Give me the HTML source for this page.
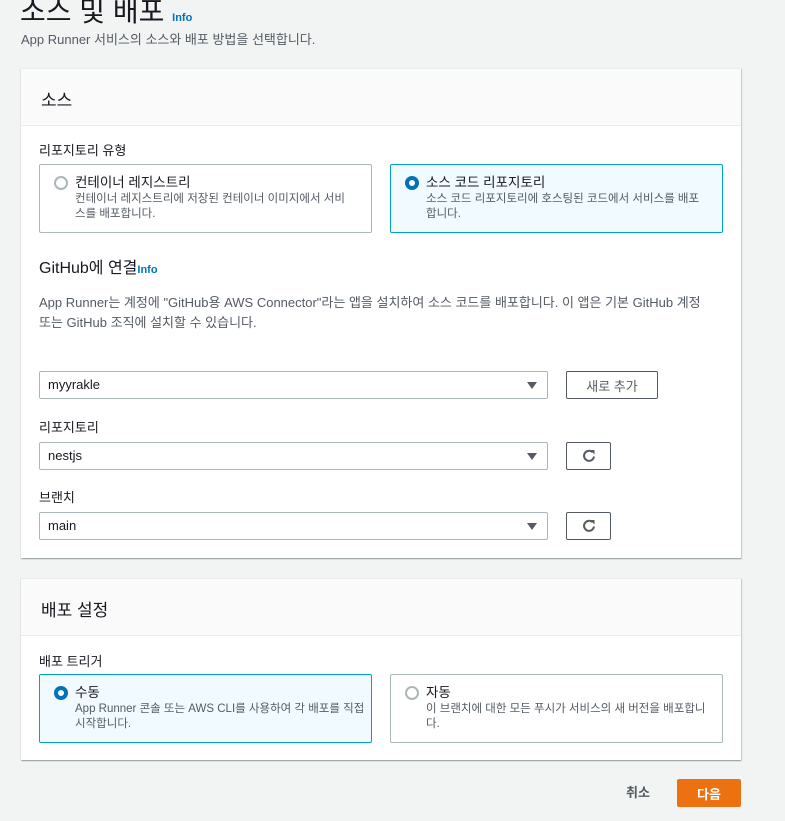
<!DOCTYPE html>
<html><head><meta charset="utf-8"><style>
*{box-sizing:border-box;margin:0;padding:0}
body{width:785px;height:821px;background:#f2f3f3;font-family:"Liberation Sans","Noto Sans CJK KR",sans-serif;color:#16191f;position:relative;overflow:hidden;font-size:13px}
.a{position:absolute;white-space:nowrap}
.panel{position:absolute;left:21px;width:720px;background:#fff;box-shadow:0 1px 1px rgba(0,28,36,.3),1px 1px 1px rgba(0,28,36,.15);border-top:1px solid #eaeded}
.ph{height:57px;background:#fafafa;border-bottom:1px solid #eaeded;font-size:17px;padding:17px 0 0 20px}
.card{position:absolute;border:1px solid #aab7b8;border-radius:2px;background:#fff}
.card.sel{border-color:#00a1c9;background:#f1faff}
.rad{position:absolute;left:14px;top:11px;width:14px;height:14px;border-radius:50%;border:2px solid #aab7b8;background:#fff}
.sel .rad{border:4px solid #0073bb}
.ct{position:absolute;left:35px;top:6px;font-size:13.5px}
.cd{position:absolute;left:35px;top:27px;font-size:11.5px;color:#545b64;line-height:15px;white-space:nowrap}
.sel-in{position:absolute;left:39px;width:509px;height:28px;border:1px solid #aab7b8;border-radius:2px;background:#fff;padding:5px 8px;font-size:13px}
.sel-in:after{content:"";position:absolute;right:10px;top:10px;border-left:5px solid transparent;border-right:5px solid transparent;border-top:7px solid #545b64}
.btn{position:absolute;border:1px solid #545b64;border-radius:2px;background:#fff;height:28px;text-align:center;color:#545b64;font-size:13px;padding-top:5px}
.lab{position:absolute;left:39px;font-size:13px}
.info{color:#0073bb;font-size:11px;font-weight:bold}
</style></head><body>
<div class="a" style="left:20px;top:-10px;font-size:28px">소스 및 배포 <span class="info">Info</span></div>
<div class="a" style="left:21px;top:29px;font-size:13px;color:#545b64">App Runner 서비스의 소스와 배포 방법을 선택합니다.</div>

<div class="panel" style="top:68px;height:490px">
<div class="ph">소스</div>
</div>
<div class="lab" style="top:140px;left:39px">리포지토리 유형</div>
<div class="card" style="left:39px;top:164px;width:333px;height:69px"><div class="rad"></div><div class="ct">컨테이너 레지스트리</div><div class="cd">컨테이너 레지스트리에 저장된 컨테이너 이미지에서 서비<br>스를 배포합니다.</div></div>
<div class="card sel" style="left:390px;top:164px;width:333px;height:69px"><div class="rad"></div><div class="ct">소스 코드 리포지토리</div><div class="cd">소스 코드 리포지토리에 호스팅된 코드에서 서비스를 배포<br>합니다.</div></div>
<div class="a" style="left:39px;top:254px;font-size:16px">GitHub에 연결<span class="info">Info</span></div>
<div class="a" style="left:39px;top:293px;font-size:13px;color:#545b64;line-height:20px">App Runner는 계정에 "GitHub용 AWS Connector"라는 앱을 설치하여 소스 코드를 배포합니다. 이 앱은 기본 GitHub 계정<br>또는 GitHub 조직에 설치할 수 있습니다.</div>
<div class="sel-in" style="top:371px">myyrakle</div>
<div class="btn" style="left:566px;top:371px;width:92px;padding-top:4px">새로 추가</div>
<div class="lab" style="top:417px">리포지토리</div>
<div class="sel-in" style="top:442px">nestjs</div>
<div class="btn" style="left:566px;top:442px;width:45px"><svg width="16" height="16" viewBox="0 0 16 16"><path d="M13 8.5A5 5 0 1 1 11.5 4.2" fill="none" stroke="#545b64" stroke-width="2"/><path d="M9 2h4.5v4.5z" fill="#545b64"/></svg></div>
<div class="lab" style="top:487px">브랜치</div>
<div class="sel-in" style="top:512px">main</div>
<div class="btn" style="left:566px;top:512px;width:45px"><svg width="16" height="16" viewBox="0 0 16 16"><path d="M13 8.5A5 5 0 1 1 11.5 4.2" fill="none" stroke="#545b64" stroke-width="2"/><path d="M9 2h4.5v4.5z" fill="#545b64"/></svg></div>

<div class="panel" style="top:578px;height:182px">
<div class="ph">배포 설정</div>
</div>
<div class="lab" style="top:651px">배포 트리거</div>
<div class="card sel" style="left:39px;top:674px;width:333px;height:69px"><div class="rad"></div><div class="ct">수동</div><div class="cd">App Runner 콘솔 또는 AWS CLI를 사용하여 각 배포를 직접<br>시작합니다.</div></div>
<div class="card" style="left:390px;top:674px;width:333px;height:69px"><div class="rad"></div><div class="ct">자동</div><div class="cd">이 브랜치에 대한 모든 푸시가 서비스의 새 버전을 배포합니<br>다.</div></div>

<div class="a" style="left:626px;top:782px;font-size:13px;color:#545b64;font-weight:bold">취소</div>
<div class="a" style="left:677px;top:779px;width:64px;height:28px;background:#ec7211;border-radius:2px;color:#fff;font-weight:bold;text-align:center;padding-top:5px">다음</div>
</body></html>
